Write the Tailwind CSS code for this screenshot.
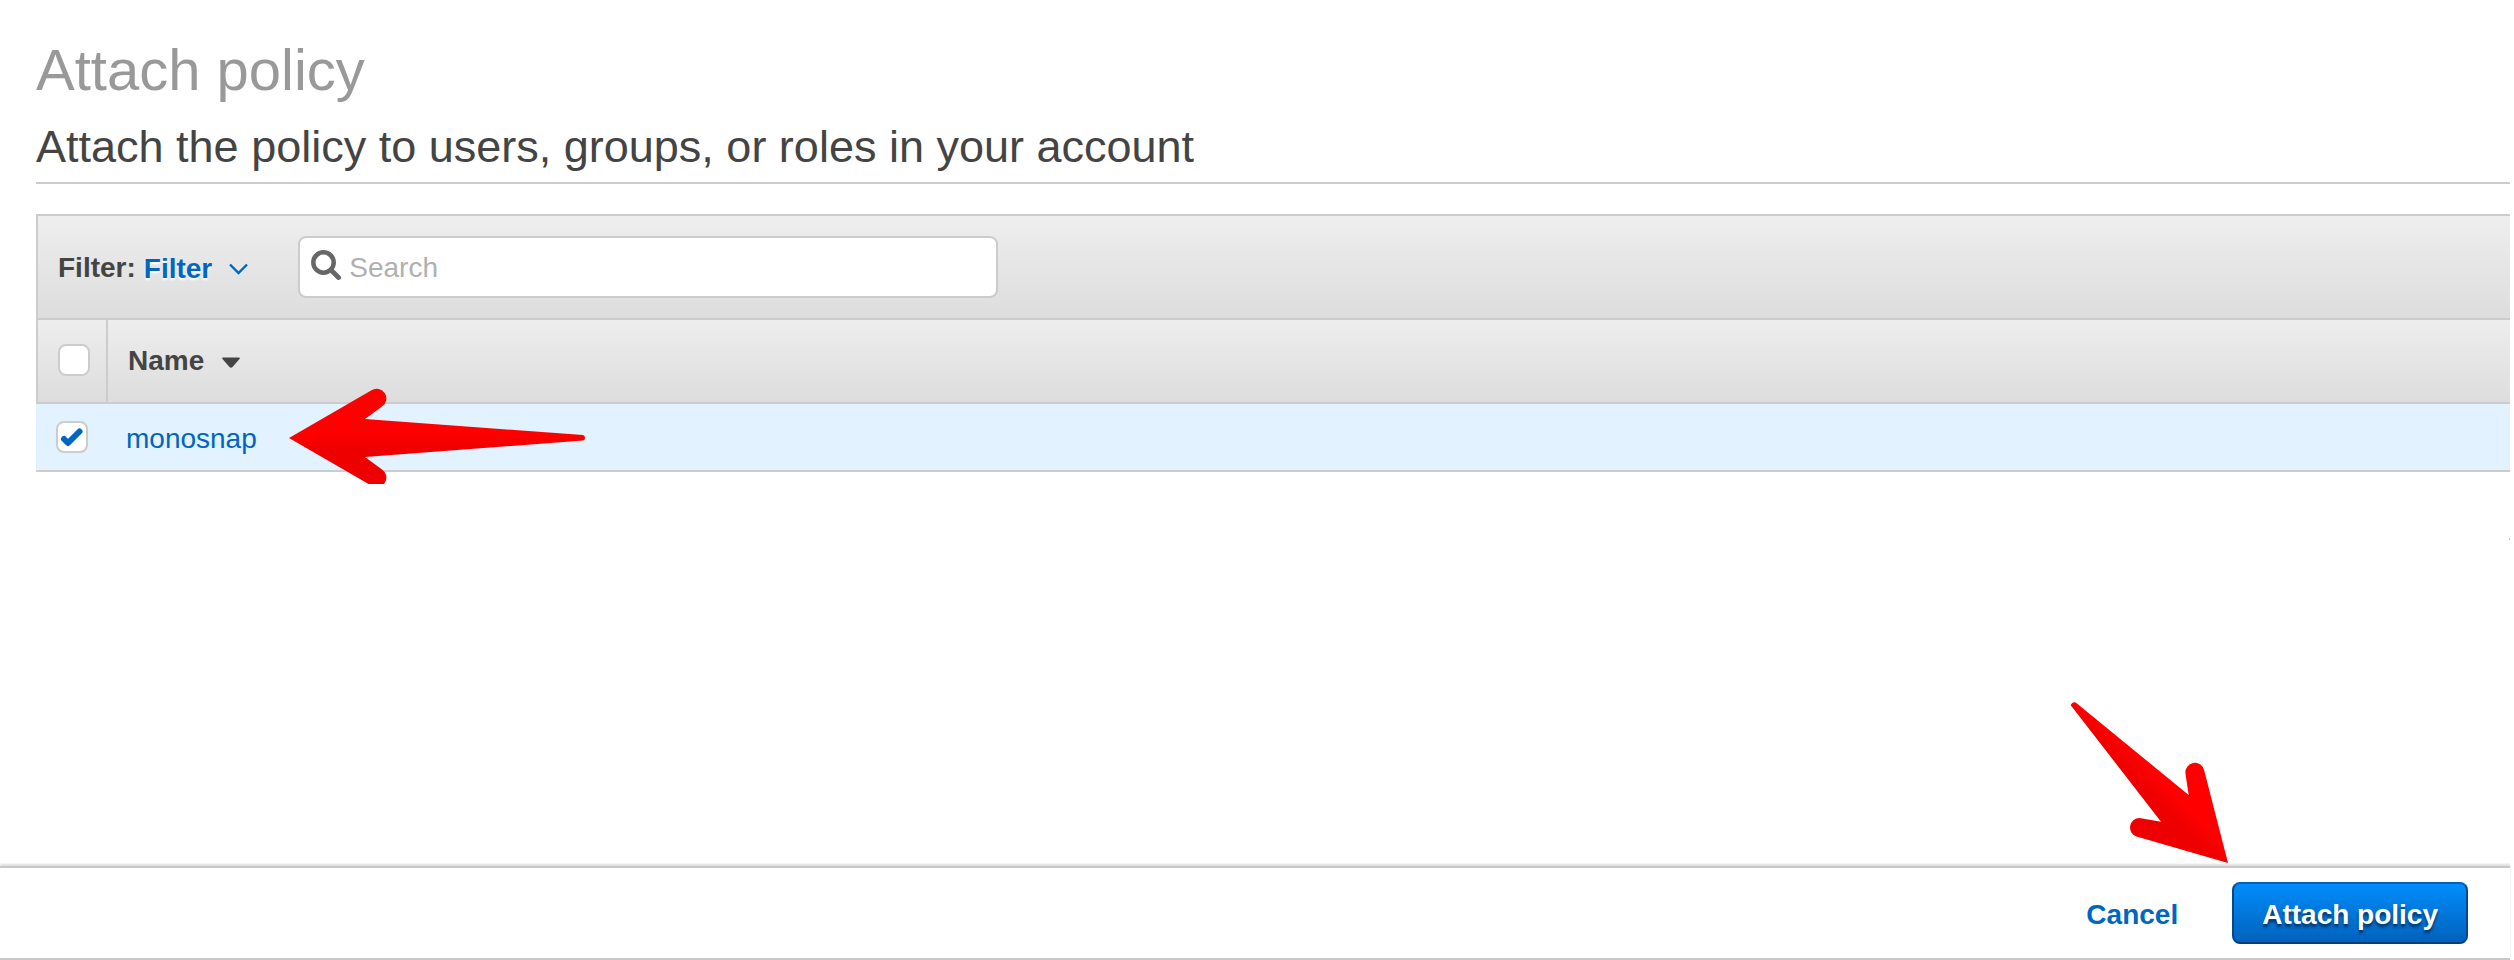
<!DOCTYPE html>
<html lang="en">
<head>
<meta charset="utf-8">
<title>Attach policy</title>
<script src="https://cdn.jsdelivr.net/npm/@tailwindcss/browser@4"></script>
</head>
<body class="flex min-h-screen flex-col bg-white pr-1 font-['Liberation_Sans',Arial,sans-serif] text-[28px] leading-8 text-[#444444]">
  <main class="relative flex-1 pt-9 pl-9">
    <h1 class="text-[58px] leading-[68px] text-[#999999]">Attach policy</h1>
    <h2 class="border-b-2 border-[#cccccc] pt-4 pb-2 text-[45px] leading-[54px]">Attach the policy to users, groups, or roles in your account</h2>

    <section class="mt-[30px]">
      <div class="flex h-[104px] items-center border-t-2 border-l-2 border-[#cccccc] bg-linear-to-b from-[#eeeeee] to-[#dddddd] pl-5">
        <label for="search" class="pt-0.5 font-bold">Filter:</label>
        <button type="button" class="ml-2 flex items-center gap-4 pt-1 font-bold text-[#0066c0] text-shadow-[0_2px_2px_#ffffff]">
          Filter
          <svg class="h-3 w-5" viewBox="0 0 20 12" fill="none" stroke="currentColor" stroke-width="2.400" aria-hidden="true"><path d="M2 1.500 10.500 10 19 1.500"/></svg>
        </button>
        <div class="ml-[50px] flex h-[62px] w-[700px] items-center gap-2 rounded-lg border-2 border-[#cccccc] bg-white pl-[11px]">
          <svg class="mb-1 size-[30px] text-[#666666]" viewBox="0 0 30 30" fill="none" stroke="currentColor" aria-hidden="true"><circle cx="12.500" cy="12.500" r="10.200" stroke-width="4.500"/><path d="m20 20 7.500 7.500" stroke-width="4.800" stroke-linecap="round"/></svg>
          <input id="search" type="text" placeholder="Search" class="h-full min-w-0 flex-1 rounded-lg bg-transparent pt-0.5 outline-none placeholder:text-[#b0b0b0]">
        </div>
      </div>

      <table class="w-full border-separate border-spacing-0 text-left">
        <thead>
          <tr class="h-[84px] bg-linear-to-b from-[#eeeeee] to-[#dddddd] shadow-[inset_0_2px_#cccccc,inset_2px_0_#cccccc]">
            <th class="w-[72px] border-r-2 border-[#cccccc] p-0 pl-[22px]">
              <input type="checkbox" aria-label="Select all" class="block size-8 appearance-none rounded-lg border-2 border-[#cccccc] bg-white">
            </th>
            <th scope="col" class="p-0 pt-0.5 pl-5 font-bold">
              <button type="button" class="flex items-center gap-[17px]">Name
                <svg class="mt-1 h-3 w-5" viewBox="0 0 20 12" fill="currentColor" aria-hidden="true"><path d="M2 .500h16q1.600 0 .500 1.500l-7 8q-1.500 1.500-3 0l-7-8Q.400.500 2 .500Z"/></svg>
              </button>
            </th>
          </tr>
        </thead>
        <tbody>
          <tr class="h-[70px] bg-[#e2f2ff] shadow-[inset_0_2px_#cccccc,inset_0_-2px_#cccccc]">
            <td class="p-0 pl-5">
              <div class="grid size-8 place-items-center">
                <input id="monosnap" type="checkbox" checked aria-label="monosnap" class="col-start-1 row-start-1 size-8 appearance-none rounded-lg border-2 border-[#cccccc] bg-white">
                <svg class="pointer-events-none col-start-1 row-start-1 size-8" viewBox="0 0 32 32" fill="none" stroke="#0066c0" stroke-width="6" stroke-linecap="round" stroke-linejoin="round" aria-hidden="true"><path d="m8 18 4 4L23.500 10.500"/></svg>
              </div>
            </td>
            <td class="p-0 pt-1 pl-[18px]"><a href="#" class="text-[#0066c0]">monosnap</a></td>
          </tr>
        </tbody>
      </table>
    </section>

    <svg class="pointer-events-none absolute top-[388px] left-[288px] h-24 w-[300px]" viewBox="288 388 300 96" aria-hidden="true">
      <defs><linearGradient id="red1" gradientUnits="userSpaceOnUse" x1="0" y1="432" x2="0" y2="450"><stop offset="0" stop-color="#ff0000"/><stop offset="1" stop-color="#ee0000"/></linearGradient></defs>
      <path fill="url(#red1)" d="M289 438 371.500 390.300A9.500 9.500 0 0 1 382 406.500L365 419 583 435Q585 435.500 585 438T583 440.500L365 457 382 469.500A9.500 9.500 0 0 1 371.500 485.700Z"/>
    </svg>
    <svg class="pointer-events-none absolute right-[281px] bottom-0 z-10 h-[166px] w-40" viewBox="2069 700 160 166" aria-hidden="true">
      <defs><linearGradient id="red2" gradientUnits="userSpaceOnUse" x1="2157" y1="776" x2="2144" y2="789"><stop offset="0" stop-color="#ff0000"/><stop offset="1" stop-color="#ee0000"/></linearGradient></defs>
      <path fill="url(#red2)" d="M2228 863 2204.300 770.800A9.500 9.500 0 0 0 2185.500 774L2188.700 795 2076 702.800Q2074 701.500 2072 703.300T2071.700 706.500L2161 821.700 2139.500 818A9.500 9.500 0 0 0 2136.500 836.500Z"/>
    </svg>
    <div class="absolute top-[538px] right-0 h-0.5 w-px bg-[#cccccc]"></div>
  </main>

  <footer class="flex h-[94px] items-center justify-end gap-[54px] border-t-2 border-b-2 border-[#c8c8c8] bg-white pr-[42px] font-bold shadow-[0_-2px_2px_#dddddd]">
    <a href="#" class="pt-1 text-[#0066c0]">Cancel</a>
    <button type="button" class="h-[62px] rounded-lg border-2 border-x-[#004a8c] border-t-[#0060b8] border-b-[#003f7c] bg-linear-to-b from-[#008dfa] to-[#0062bd] px-7 pt-1 text-white text-shadow-[0_3px_3px_#003060]">Attach policy</button>
  </footer>
</body>
</html>
